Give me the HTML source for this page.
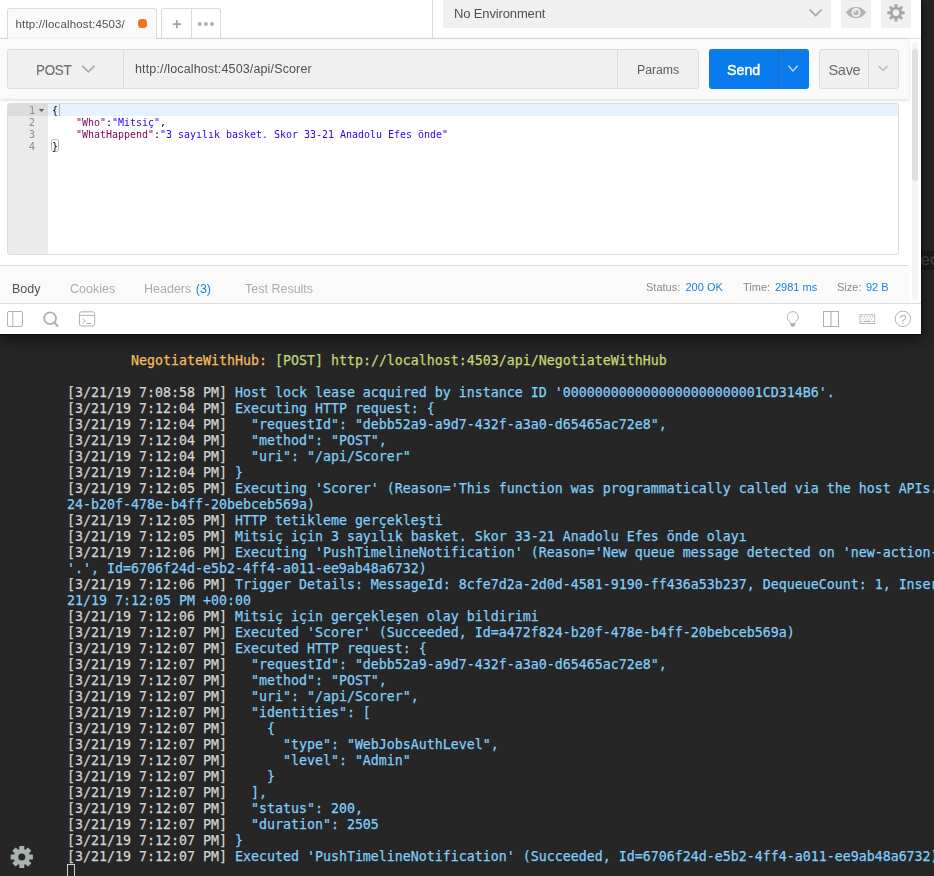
<!DOCTYPE html>
<html lang="tr">
<head>
<meta charset="utf-8">
<title>Postman - Scorer</title>
<style>
*{box-sizing:border-box;margin:0;padding:0}
html,body{width:934px;height:876px;overflow:hidden;background:#262626}
body{position:relative;font-family:"Liberation Sans","DejaVu Sans",sans-serif;color:#505050}
.abs{position:absolute}
/* ---------- terminal ---------- */
#term{position:absolute;left:0;top:0;width:934px;height:876px;background:#262626;overflow:hidden}
#term pre{position:absolute;left:67px;top:352px;font-family:"DejaVu Sans Mono","Liberation Mono",monospace;font-size:14.6px;line-height:16px;color:#80cefa;-webkit-text-stroke:.25px;white-space:pre;transform-origin:0 0;transform:scaleX(0.9101)}
#term .ts{color:#d4d4d4}
#term .y{color:#f6bc62}
#term .g{color:#c0d880}
#term .u{color:#c8d874}
#cursor{position:absolute;left:67px;top:864px;width:8px;height:14px;border:1px solid #d0d0d0}
#ec{position:absolute;left:920px;top:251px;width:14px;height:19px;background:#1c1c1c;color:#4a4a4a;font-family:"DejaVu Sans","Liberation Sans",sans-serif;font-size:16px;line-height:18px;overflow:hidden;white-space:nowrap}
/* ---------- postman window ---------- */
#pm{position:absolute;left:0;top:0;width:921px;height:334px;background:#fff;will-change:transform;box-shadow:0 0 0 1px rgba(0,0,0,.45),0 4px 14px 2px rgba(0,0,0,.55);overflow:hidden}
#topline{position:absolute;left:0;top:38px;width:921px;height:1px;background:#dbdbdb}
#tab{position:absolute;left:7px;top:8px;width:150px;height:31px;border:1px solid #dbdbdb;border-bottom:none;border-radius:3px 3px 0 0;background:#fafafa}
#tab span{position:absolute;left:7.500px;top:8px;letter-spacing:.15px;font-size:11.5px;line-height:14px;color:#505050;white-space:nowrap}
#dot{position:absolute;left:138px;top:19px;width:9px;height:9px;border-radius:3.500px;background:#f47023}
#plus{position:absolute;left:161px;top:8px;width:60px;height:30px;border:1px solid #dbdbdb;border-bottom:none;border-radius:3px 3px 0 0;background:#fff}
#plus i{position:absolute;left:29px;top:0;width:1px;height:30px;background:#dbdbdb}
#vdiv{position:absolute;left:432px;top:0;width:1px;height:38px;background:#dbdbdb}
#env{position:absolute;left:443px;top:-4px;width:388px;height:32px;border-radius:3px;background:#f0f0f0}
#env span{position:absolute;left:11px;top:10px;letter-spacing:-.14px;font-size:13px;line-height:16px;color:#505050;white-space:nowrap}
#eye{position:absolute;left:841px;top:-4px;width:30px;height:32px;border-radius:3px;background:#f0f0f0}
#gear{position:absolute;left:881px;top:-4px;width:30px;height:32px;border-radius:3px;background:#f0f0f0}
/* request bar */
#req{position:absolute;left:0;top:39px;width:909px;height:60px;background:#fafafa;box-shadow:0 1px 4px rgba(0,0,0,.16)}
#urlbox{position:absolute;left:7px;top:10px;width:692px;height:40px;border:1px solid #dcdcdc;border-radius:3px;background:#f0f0f0}
#method{position:absolute;left:0;top:0;width:116px;height:38px;background:#f0f0f0;border-right:1px solid #dcdcdc;border-radius:2px 0 0 2px}
#method span{position:absolute;left:28.300px;top:11.500px;font-size:14px;letter-spacing:-.25px;line-height:17px;color:#707070;-webkit-text-stroke:.2px;transform-origin:0 0;transform:scaleX(.955)}
#url{position:absolute;left:127px;top:11px;letter-spacing:.14px;font-size:12.5px;line-height:16px;color:#505050;white-space:nowrap}
#params{position:absolute;left:609px;top:0;width:81px;height:38px;background:#f0f0f0;border-left:1px solid #dcdcdc;border-radius:0 2px 2px 0}
#params span{position:absolute;left:19px;top:13.300px;font-size:12.300px;letter-spacing:-.05px;line-height:15px;color:#5c5c5c}
#send{position:absolute;left:709px;top:10px;width:100px;height:40px;border-radius:3px;background:#097bed}
#send span{position:absolute;left:18px;top:12px;font-size:15px;line-height:18px;color:#fff;font-weight:normal;-webkit-text-stroke:.45px #fff;transform-origin:0 0;transform:scaleX(.95)}
#send i{position:absolute;left:69px;top:0;width:1px;height:40px;background:#2a68c0}
#save{position:absolute;left:819px;top:10px;width:80px;height:40px;border:1px solid #dcdcdc;border-radius:3px;background:#f0f0f0}
#save span{position:absolute;left:8.500px;top:11px;font-size:14.500px;letter-spacing:-.3px;line-height:18px;color:#6a6a6a}
#save i{position:absolute;left:48px;top:0;width:1px;height:38px;background:#dcdcdc}
/* editor */
#ed{position:absolute;left:7px;top:103px;width:892px;height:152px;border:1px solid #dcdcdc;border-radius:3px;background:#fff;overflow:hidden}
#gut{position:absolute;left:0;top:0;width:40px;height:150px;background:#ebebeb}
#act{position:absolute;left:40px;top:0;width:852px;height:12px;background:#e8f2fe}
#gact{position:absolute;left:0;top:0;width:40px;height:12px;background:#dcdcdc}
#ed pre{position:absolute;font-family:"DejaVu Sans Mono","Liberation Mono",monospace;font-size:11px;line-height:12px;white-space:pre;transform-origin:0 0;transform:scaleX(0.906)}
#lnum{left:21px;top:.7px;color:#8a8a8a}
#code{left:44px;top:.7px;color:#000}
#code .k{color:#7f0055}
#code .s{color:#2a00ff}
#caret{position:absolute;left:50.500px;top:0;width:1.500px;height:12px;background:#a9b4c0}
#brk{position:absolute;left:43.300px;top:35.200px;width:7.600px;height:13.200px;border:1px solid #b8b8b8;border-radius:2.500px}
/* response tabs */
#rtabs{position:absolute;left:0;top:265px;width:909px;height:38px;background:#fafafa;border-top:1px solid #dcdcdc}
#rtabs span{position:absolute;top:16px;font-size:12.5px;line-height:15px;white-space:nowrap;color:#acacac}
#rtabs span.st{font-size:11px;top:14px;color:#8a8a8a}
#rtabs span.bl{font-size:11px;top:14px;color:#1a82e2}
/* bottom toolbar */
#bbar{position:absolute;left:0;top:303px;width:921px;height:31px;background:#fff;border-top:1px solid #dcdcdc}
/* scrollbar */
#sbar{position:absolute;left:910px;top:39px;width:11px;height:264px;background:#fff}
#strack{position:absolute;left:2px;top:3px;width:6px;height:258px;border-radius:3px;background:#f5f5f5}
#sthumb{position:absolute;left:2px;top:10px;width:6px;height:132px;border-radius:3px;background:#e0e0e0}
</style>
</head>
<body>
<div id="term">
<pre><span class="y">        NegotiateWithHub:</span> <span class="g">[POST]</span> <span class="u">http://localhost:4503/api/NegotiateWithHub</span>

<span class="ts">[3/21/19 7:08:58 PM]</span> Host lock lease acquired by instance ID '0000000000000000000000001CD314B6'.
<span class="ts">[3/21/19 7:12:04 PM]</span> Executing HTTP request: {
<span class="ts">[3/21/19 7:12:04 PM]</span>   "requestId": "debb52a9-a9d7-432f-a3a0-d65465ac72e8",
<span class="ts">[3/21/19 7:12:04 PM]</span>   "method": "POST",
<span class="ts">[3/21/19 7:12:04 PM]</span>   "uri": "/api/Scorer"
<span class="ts">[3/21/19 7:12:04 PM]</span> }
<span class="ts">[3/21/19 7:12:05 PM]</span> Executing 'Scorer' (Reason='This function was programmatically called via the host APIs.', Id=a472f8
24-b20f-478e-b4ff-20bebceb569a)
<span class="ts">[3/21/19 7:12:05 PM]</span> HTTP tetikleme gerçekleşti
<span class="ts">[3/21/19 7:12:05 PM]</span> Mitsiç için 3 sayılık basket. Skor 33-21 Anadolu Efes önde olayı
<span class="ts">[3/21/19 7:12:06 PM]</span> Executing 'PushTimelineNotification' (Reason='New queue message detected on 'new-action-queue
'.', Id=6706f24d-e5b2-4ff4-a011-ee9ab48a6732)
<span class="ts">[3/21/19 7:12:06 PM]</span> Trigger Details: MessageId: 8cfe7d2a-2d0d-4581-9190-ff436a53b237, DequeueCount: 1, InsertionTime: 3/
21/19 7:12:05 PM +00:00
<span class="ts">[3/21/19 7:12:06 PM]</span> Mitsiç için gerçekleşen olay bildirimi
<span class="ts">[3/21/19 7:12:07 PM]</span> Executed 'Scorer' (Succeeded, Id=a472f824-b20f-478e-b4ff-20bebceb569a)
<span class="ts">[3/21/19 7:12:07 PM]</span> Executed HTTP request: {
<span class="ts">[3/21/19 7:12:07 PM]</span>   "requestId": "debb52a9-a9d7-432f-a3a0-d65465ac72e8",
<span class="ts">[3/21/19 7:12:07 PM]</span>   "method": "POST",
<span class="ts">[3/21/19 7:12:07 PM]</span>   "uri": "/api/Scorer",
<span class="ts">[3/21/19 7:12:07 PM]</span>   "identities": [
<span class="ts">[3/21/19 7:12:07 PM]</span>     {
<span class="ts">[3/21/19 7:12:07 PM]</span>       "type": "WebJobsAuthLevel",
<span class="ts">[3/21/19 7:12:07 PM]</span>       "level": "Admin"
<span class="ts">[3/21/19 7:12:07 PM]</span>     }
<span class="ts">[3/21/19 7:12:07 PM]</span>   ],
<span class="ts">[3/21/19 7:12:07 PM]</span>   "status": 200,
<span class="ts">[3/21/19 7:12:07 PM]</span>   "duration": 2505
<span class="ts">[3/21/19 7:12:07 PM]</span> }
<span class="ts">[3/21/19 7:12:07 PM]</span> Executed 'PushTimelineNotification' (Succeeded, Id=6706f24d-e5b2-4ff4-a011-ee9ab48a6732)</pre>
<svg id="gear2" class="abs" style="left:9px;top:844px" width="26" height="26" viewBox="0 0 26 26"><circle cx="12.8" cy="13" r="8.0" fill="#a9b1b1"/><rect x="10.3" y="1.9000000000000004" width="5.0" height="4.6" rx="0.5" fill="#a9b1b1" transform="rotate(0.0 12.8 13)"/><rect x="10.3" y="1.9000000000000004" width="5.0" height="4.6" rx="0.5" fill="#a9b1b1" transform="rotate(45.0 12.8 13)"/><rect x="10.3" y="1.9000000000000004" width="5.0" height="4.6" rx="0.5" fill="#a9b1b1" transform="rotate(90.0 12.8 13)"/><rect x="10.3" y="1.9000000000000004" width="5.0" height="4.6" rx="0.5" fill="#a9b1b1" transform="rotate(135.0 12.8 13)"/><rect x="10.3" y="1.9000000000000004" width="5.0" height="4.6" rx="0.5" fill="#a9b1b1" transform="rotate(180.0 12.8 13)"/><rect x="10.3" y="1.9000000000000004" width="5.0" height="4.6" rx="0.5" fill="#a9b1b1" transform="rotate(225.0 12.8 13)"/><rect x="10.3" y="1.9000000000000004" width="5.0" height="4.6" rx="0.5" fill="#a9b1b1" transform="rotate(270.0 12.8 13)"/><rect x="10.3" y="1.9000000000000004" width="5.0" height="4.6" rx="0.5" fill="#a9b1b1" transform="rotate(315.0 12.8 13)"/><circle cx="12.8" cy="13" r="3.5" fill="#262626"/></svg>
<div id="cursor"></div>
<div id="ec">ec</div>
</div>

<div id="pm">
  <div id="topline"></div>
  <div id="plus"><i></i></div>
  <div id="tab"><span>http://localhost:4503/</span></div>
  <div id="dot"></div>
  <div id="vdiv"></div>
  <div id="env"><span>No Environment</span></div>
  <div id="eye"></div>
  <div id="gear"></div>

  <div id="req">
    <div id="urlbox">
      <div id="method"><span>POST</span></div>
      <div id="url">http://localhost:4503/api/Scorer</div>
      <div id="params"><span>Params</span></div>
    </div>
    <div id="send"><span>Send</span><i></i></div>
    <div id="save"><span>Save</span><i></i></div>
  </div>

  <div id="ed">
    <div id="gut"></div><div id="gact"></div><div id="act"></div><div id="caret"></div><div id="brk"></div>
<pre id="lnum">1
2
3
4</pre>
<pre id="code">{
    <span class="k">"Who"</span>:<span class="s">"Mitsiç"</span>,
    <span class="k">"WhatHappend"</span>:<span class="s">"3 sayılık basket. Skor 33-21 Anadolu Efes önde"</span>
}</pre>
  </div>

  <div id="rtabs">
    <span style="left:12px;color:#505050">Body</span>
    <span style="left:70px">Cookies</span>
    <span style="left:144px">Headers <b style="font-weight:normal;color:#1a82e2;margin-left:1px">(3)</b></span>
    <span style="left:245px">Test Results</span>
    <span class="st" style="left:646px">Status:</span><span class="bl" style="left:685.500px">200 OK</span>
    <span class="st" style="left:743px">Time:</span><span class="bl" style="left:775px">2981 ms</span>
    <span class="st" style="left:837px">Size:</span><span class="bl" style="left:866px">92 B</span>
  </div>
  <div id="bbar"></div>
  <div id="sbar"><div id="strack"></div><div id="sthumb"></div></div>
<svg class="abs" style="left:171px;top:18px" width="12" height="12" viewBox="0 0 12 12"><path d="M5.900 2v8.200M1.800 6.100h8.200" stroke="#a3a3a3" stroke-width="1.700" fill="none"/></svg>
<svg class="abs" style="left:196px;top:20px" width="20" height="8" viewBox="0 0 20 8"><circle cx="3.800" cy="4" r="2" fill="#b0b0b0"/><circle cx="9.900" cy="4" r="2" fill="#b0b0b0"/><circle cx="16" cy="4" r="2" fill="#b0b0b0"/></svg>
<svg class="abs" style="left:808px;top:8px" width="16" height="10" viewBox="0 0 16 10"><path d="M1.6 1.6L7.6 7.6L13.6 1.6" stroke="#a8a8a8" stroke-width="1.600" fill="none"/></svg>
<svg class="abs" style="left:845px;top:6px" width="22" height="14" viewBox="0 0 22 14"><path d="M1 6.600C4 1.800 8 0.900 11 0.900S18 1.800 21 6.600C18 11.300 14 12.200 11 12.200S4 11.300 1 6.600Z" fill="#b3b3b3"/><circle cx="11" cy="6.500" r="4.500" fill="#f0f0f0"/><circle cx="11" cy="6.500" r="2.600" fill="#b3b3b3"/><path d="M11 6.500V3.900A2.600 2.600 0 0 0 8.400 6.500Z" fill="#e0e0e0"/></svg>
<svg class="abs" style="left:885px;top:2px" width="22" height="22" viewBox="0 0 22 22"><circle cx="11" cy="10.85" r="6.0" fill="#a6a6a6"/><rect x="9.50" y="2.00" width="3.0" height="4.35" rx="1.3" fill="#a6a6a6" transform="rotate(0.0 11 10.85)"/><rect x="9.50" y="2.00" width="3.0" height="4.35" rx="1.3" fill="#a6a6a6" transform="rotate(45.0 11 10.85)"/><rect x="9.50" y="2.00" width="3.0" height="4.35" rx="1.3" fill="#a6a6a6" transform="rotate(90.0 11 10.85)"/><rect x="9.50" y="2.00" width="3.0" height="4.35" rx="1.3" fill="#a6a6a6" transform="rotate(135.0 11 10.85)"/><rect x="9.50" y="2.00" width="3.0" height="4.35" rx="1.3" fill="#a6a6a6" transform="rotate(180.0 11 10.85)"/><rect x="9.50" y="2.00" width="3.0" height="4.35" rx="1.3" fill="#a6a6a6" transform="rotate(225.0 11 10.85)"/><rect x="9.50" y="2.00" width="3.0" height="4.35" rx="1.3" fill="#a6a6a6" transform="rotate(270.0 11 10.85)"/><rect x="9.50" y="2.00" width="3.0" height="4.35" rx="1.3" fill="#a6a6a6" transform="rotate(315.0 11 10.85)"/><circle cx="11" cy="10.85" r="3.3" fill="#f0f0f0"/></svg>
<svg class="abs" style="left:80px;top:64px" width="16" height="11" viewBox="0 0 16 11"><path d="M2.300 1.800L8.400 7.900L14.500 1.800" stroke="#aaaaaa" stroke-width="1.700" fill="none"/></svg>
<svg class="abs" style="left:786px;top:64px" width="14" height="10" viewBox="0 0 14 10"><path d="M2.400 1.800L7 6.900L11.600 1.800" stroke="#c9d6e2" stroke-width="1.4" fill="none"/></svg>
<svg class="abs" style="left:877px;top:64px" width="12" height="9" viewBox="0 0 12 9"><path d="M1.600 2L6 6.400L10.400 2" stroke="#b3b3b3" stroke-width="1.2" fill="none"/></svg>
<svg class="abs" style="left:38px;top:108px" width="7" height="5" viewBox="0 0 7 5"><path d="M0.800 1h5.400L3.500 3.900Z" fill="#606060"/></svg>
<svg class="abs" style="left:6px;top:310px" width="18" height="18" viewBox="0 0 18 18"><rect x="1.5" y="1.5" width="15" height="15" rx="1.5" stroke="#b3b3b3" fill="none"/><path d="M6.8 1.5v15" stroke="#b3b3b3"/></svg>
<svg class="abs" style="left:42px;top:310px" width="18" height="18" viewBox="0 0 18 18"><circle cx="8.100" cy="8.200" r="5.900" stroke="#b0b0b0" stroke-width="1.800" fill="none"/><path d="M12.300 12.600L16 16.600" stroke="#b0b0b0" stroke-width="2.200"/></svg>
<svg class="abs" style="left:78px;top:310px" width="18" height="18" viewBox="0 0 18 18"><rect x="1.5" y="1.8" width="15.2" height="14.2" rx="2" stroke="#b3b3b3" fill="none"/><path d="M1.5 5.4h15.2" stroke="#b3b3b3"/><path d="M4.5 8.6L7.3 11L4.5 13.4M8.5 13.5h4.5" stroke="#b3b3b3" fill="none"/></svg>
<svg class="abs" style="left:784px;top:309px" width="18" height="20" viewBox="0 0 18 20"><path d="M8.8 2.5a5.6 5.6 0 0 0-3.3 10.1c.7.6 1 1.200 1.100 2h4.400c.1-.8.400-1.400 1.100-2A5.600 5.600 0 0 0 8.800 2.500Z" stroke="#b3b3b3" fill="none"/><path d="M6.400 14.600h4.800v1.500l-1.200 1.600h-2.400l-1.200-1.600Z" fill="#b3b3b3"/></svg>
<svg class="abs" style="left:822px;top:310px" width="18" height="18" viewBox="0 0 18 18"><rect x="1.500" y="1.500" width="15" height="15" stroke="#b0b0b0" fill="none"/><path d="M9 1.500v15" stroke="#c0c0c0" stroke-width="1.4"/></svg>
<svg class="abs" style="left:858px;top:313px" width="18" height="12" viewBox="0 0 18 12"><rect x="1.900" y="1.700" width="14.800" height="8.800" stroke="#bdbdbd" fill="none"/><rect x="3.0" y="3.200" width="1.200" height="1.100" fill="#aaaaaa"/><rect x="5.8" y="3.200" width="1.200" height="1.100" fill="#aaaaaa"/><rect x="8.6" y="3.200" width="1.200" height="1.100" fill="#aaaaaa"/><rect x="11.4" y="3.200" width="1.200" height="1.100" fill="#aaaaaa"/><rect x="14.2" y="3.200" width="1.200" height="1.100" fill="#aaaaaa"/><rect x="4.4" y="5.500" width="1.200" height="1.100" fill="#c6c6c6"/><rect x="7.2" y="5.500" width="1.200" height="1.100" fill="#c6c6c6"/><rect x="10.0" y="5.500" width="1.200" height="1.100" fill="#c6c6c6"/><rect x="12.8" y="5.500" width="1.200" height="1.100" fill="#c6c6c6"/><rect x="3" y="7.800" width="1.200" height="1.100" fill="#aaaaaa"/><rect x="5.800" y="7.800" width="7" height="1.100" fill="#aaaaaa"/><rect x="14.200" y="7.800" width="1.200" height="1.100" fill="#aaaaaa"/></svg>
<svg class="abs" style="left:893px;top:309px" width="20" height="20" viewBox="0 0 20 20"><circle cx="9.900" cy="9.800" r="7.700" stroke="#b3b3b3" fill="none"/><text x="9.900" y="14.800" font-family="Liberation Sans,sans-serif" font-size="13.500" fill="#b3b3b3" text-anchor="middle">?</text></svg>
</div>
</body>
</html>
